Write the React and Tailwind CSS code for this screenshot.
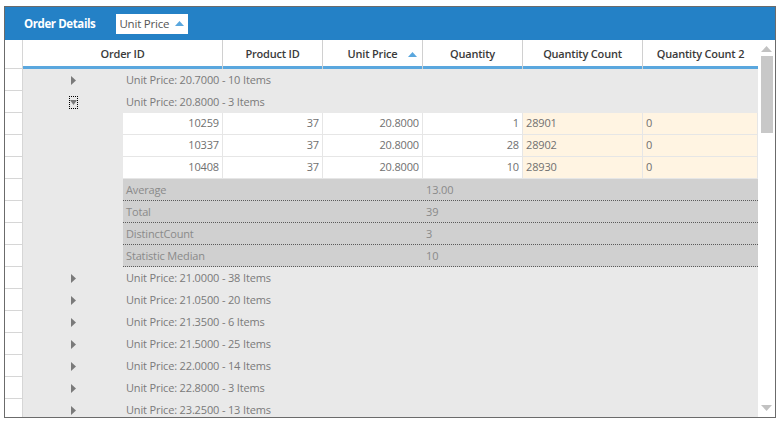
import React from 'react';

const columns = [
  { key: 'orderId', label: 'Order ID', w: 'w-[200px]' },
  { key: 'productId', label: 'Product ID', w: 'w-[100px]' },
  { key: 'unitPrice', label: 'Unit Price', w: 'w-[100px]', sorted: true },
  { key: 'quantity', label: 'Quantity', w: 'w-[100px]' },
  { key: 'qc', label: 'Quantity Count', w: 'w-[120px]' },
  { key: 'qc2', label: 'Quantity Count 2', w: 'w-[115px]' },
];

const rows = [
  { type: 'group', label: 'Unit Price: 20.7000 - 10 Items' },
  { type: 'group', label: 'Unit Price: 20.8000 - 3 Items', open: true },
  { type: 'data', v: ['10259', '37', '20.8000', '1', '28901', '0'] },
  { type: 'data', v: ['10337', '37', '20.8000', '28', '28902', '0'] },
  { type: 'data', v: ['10408', '37', '20.8000', '10', '28930', '0'] },
  { type: 'sum', label: 'Average', value: '13.00' },
  { type: 'sum', label: 'Total', value: '39' },
  { type: 'sum', label: 'DistinctCount', value: '3' },
  { type: 'sum', label: 'Statistic Median', value: '10' },
  { type: 'group', label: 'Unit Price: 21.0000 - 38 Items' },
  { type: 'group', label: 'Unit Price: 21.0500 - 20 Items' },
  { type: 'group', label: 'Unit Price: 21.3500 - 6 Items' },
  { type: 'group', label: 'Unit Price: 21.5000 - 25 Items' },
  { type: 'group', label: 'Unit Price: 22.0000 - 14 Items' },
  { type: 'group', label: 'Unit Price: 22.8000 - 3 Items' },
  { type: 'group', label: 'Unit Price: 23.2500 - 13 Items' },
];

const SortUp = ({ className = '' }) => (
  <svg width="9" height="5" viewBox="0 0 9 5" className={className}>
    <path d="M0 5 L4.5 0 L9 5 Z" fill="#5aa7de" />
  </svg>
);

const Collapsed = () => (
  <svg width="5" height="9" viewBox="0 0 5 9">
    <path d="M0 0 L5 4.5 L0 9 Z" fill="#7a7a7a" />
  </svg>
);

const Expanded = () => (
  <div className="w-[9px] h-[13px] border border-dotted border-black flex items-center justify-center">
    <svg width="7" height="5" viewBox="0 0 7 5">
      <path d="M0 0 L7 0 L3.5 5 Z" fill="#7a7a7a" />
    </svg>
  </div>
);

const GroupRow = ({ row }) => (
  <div className="flex h-[22px] shrink-0 bg-[#e9e9e9]">
    <div className="w-[100px] flex items-center justify-center">
      {row.open ? <Expanded /> : <Collapsed />}
    </div>
    <div className="flex items-center pl-[3px] text-[#7a7a7a] whitespace-nowrap">{row.label}</div>
  </div>
);

const DataRow = ({ row }) => (
  <div className="flex h-[22px] shrink-0 bg-[#e9e9e9]">
    <div className="w-[100px]" />
    <div className="flex flex-1 border-b border-[#e6e6e6]">
      {row.v.map((val, i) => {
        const w = ['w-[100px]', 'w-[100px]', 'w-[100px]', 'w-[100px]', 'w-[120px]', 'flex-1'][i];
        const right = i < 4;
        const bg = i >= 4 ? 'bg-[#fff4e2]' : 'bg-white';
        return (
          <div
            key={i}
            className={`${w} ${bg} flex items-center border-r border-[#e6e6e6] px-[3px] text-[#707070] ${right ? 'justify-end' : 'justify-start'}`}
          >
            {val}
          </div>
        );
      })}
    </div>
  </div>
);

const SumRow = ({ row }) => (
  <div className="flex h-[22px] shrink-0 bg-[#e9e9e9]">
    <div className="w-[100px]" />
    <div className="flex flex-1 bg-[#d0d0d0] border-b border-dotted border-[#5a5a5a] text-[#8a8a8a] pt-[2px]">
      <div className="w-[300px] flex items-center pl-[3px]">{row.label}</div>
      <div className="flex items-center pl-[3px]">{row.value}</div>
    </div>
  </div>
);

export default function App() {
  return (
    <div className="w-[778px] h-[423px] bg-white pt-[6px] pl-[4px]" style={{ fontFamily: '"Open Sans", "Noto Sans", sans-serif' }}>
      <div className="w-[772px] h-[412px] border border-[#6b6b6b] flex flex-col overflow-hidden text-[11px] tracking-[-0.15px]">
        {/* Toolbar */}
        <div className="h-[33px] bg-[#2481c6] flex items-center shrink-0">
          <div className="ml-[19px] text-white font-bold text-[11.5px] tracking-[-0.4px] whitespace-nowrap">Order Details</div>
          <div className="ml-[21px] h-[20px] w-[72px] bg-white flex items-center pl-[3px] text-[#555] text-[11.5px] tracking-[-0.2px] whitespace-nowrap">
            <span>Unit Price</span>
            <SortUp className="ml-[6px]" />
          </div>
        </div>

        <div className="flex flex-1 min-h-0">
          {/* Grid */}
          <div className="flex w-[753px] flex-col min-h-0">
            {/* Header */}
            <div className="flex h-[29px] shrink-0">
              <div className="w-[18px] border-r border-b border-[#d6d6d6] bg-white" />
              {columns.map((c) => (
                <div key={c.key} className={`${c.w} border-r border-[#d0d0d0] last:border-r-0 flex flex-col`}>
                  <div className="flex-1 flex items-center justify-center relative pt-[2px] font-semibold text-[#3a3a3a] text-[11px] tracking-[-0.2px] whitespace-nowrap">
                    {c.label}
                    {c.sorted && <SortUp className="absolute right-[5px] top-[12px]" />}
                  </div>
                  <div className="h-[3px] bg-[#5aa7de]" />
                </div>
              ))}
            </div>

            {/* Body */}
            <div className="flex flex-1 min-h-0 overflow-hidden">
              <div className="w-[18px] border-r border-[#d6d6d6] bg-white shrink-0 flex flex-col">
                {rows.map((r, i) => (
                  <div key={i} className="h-[22px] shrink-0 border-b border-[#d6d6d6]" />
                ))}
              </div>
              <div className="flex-1 flex flex-col">
                {rows.map((r, i) =>
                  r.type === 'group' ? (
                    <GroupRow key={i} row={r} />
                  ) : r.type === 'data' ? (
                    <DataRow key={i} row={r} />
                  ) : (
                    <SumRow key={i} row={r} />
                  )
                )}
              </div>
            </div>
          </div>

          {/* Scrollbar */}
          <div className="w-[17px] bg-white flex flex-col items-center shrink-0">
            <svg width="11" height="6" viewBox="0 0 11 6" className="mt-[6px]">
              <path d="M0 6 L5.5 0 L11 6 Z" fill="#c2c2c2" />
            </svg>
            <div className="w-[12px] h-[77px] bg-[#c8c8c8] mt-[4px]" />
            <div className="flex-1" />
            <svg width="11" height="6" viewBox="0 0 11 6" className="mb-[6px]">
              <path d="M0 0 L11 0 L5.5 6 Z" fill="#c2c2c2" />
            </svg>
          </div>
        </div>
      </div>
    </div>
  );
}
